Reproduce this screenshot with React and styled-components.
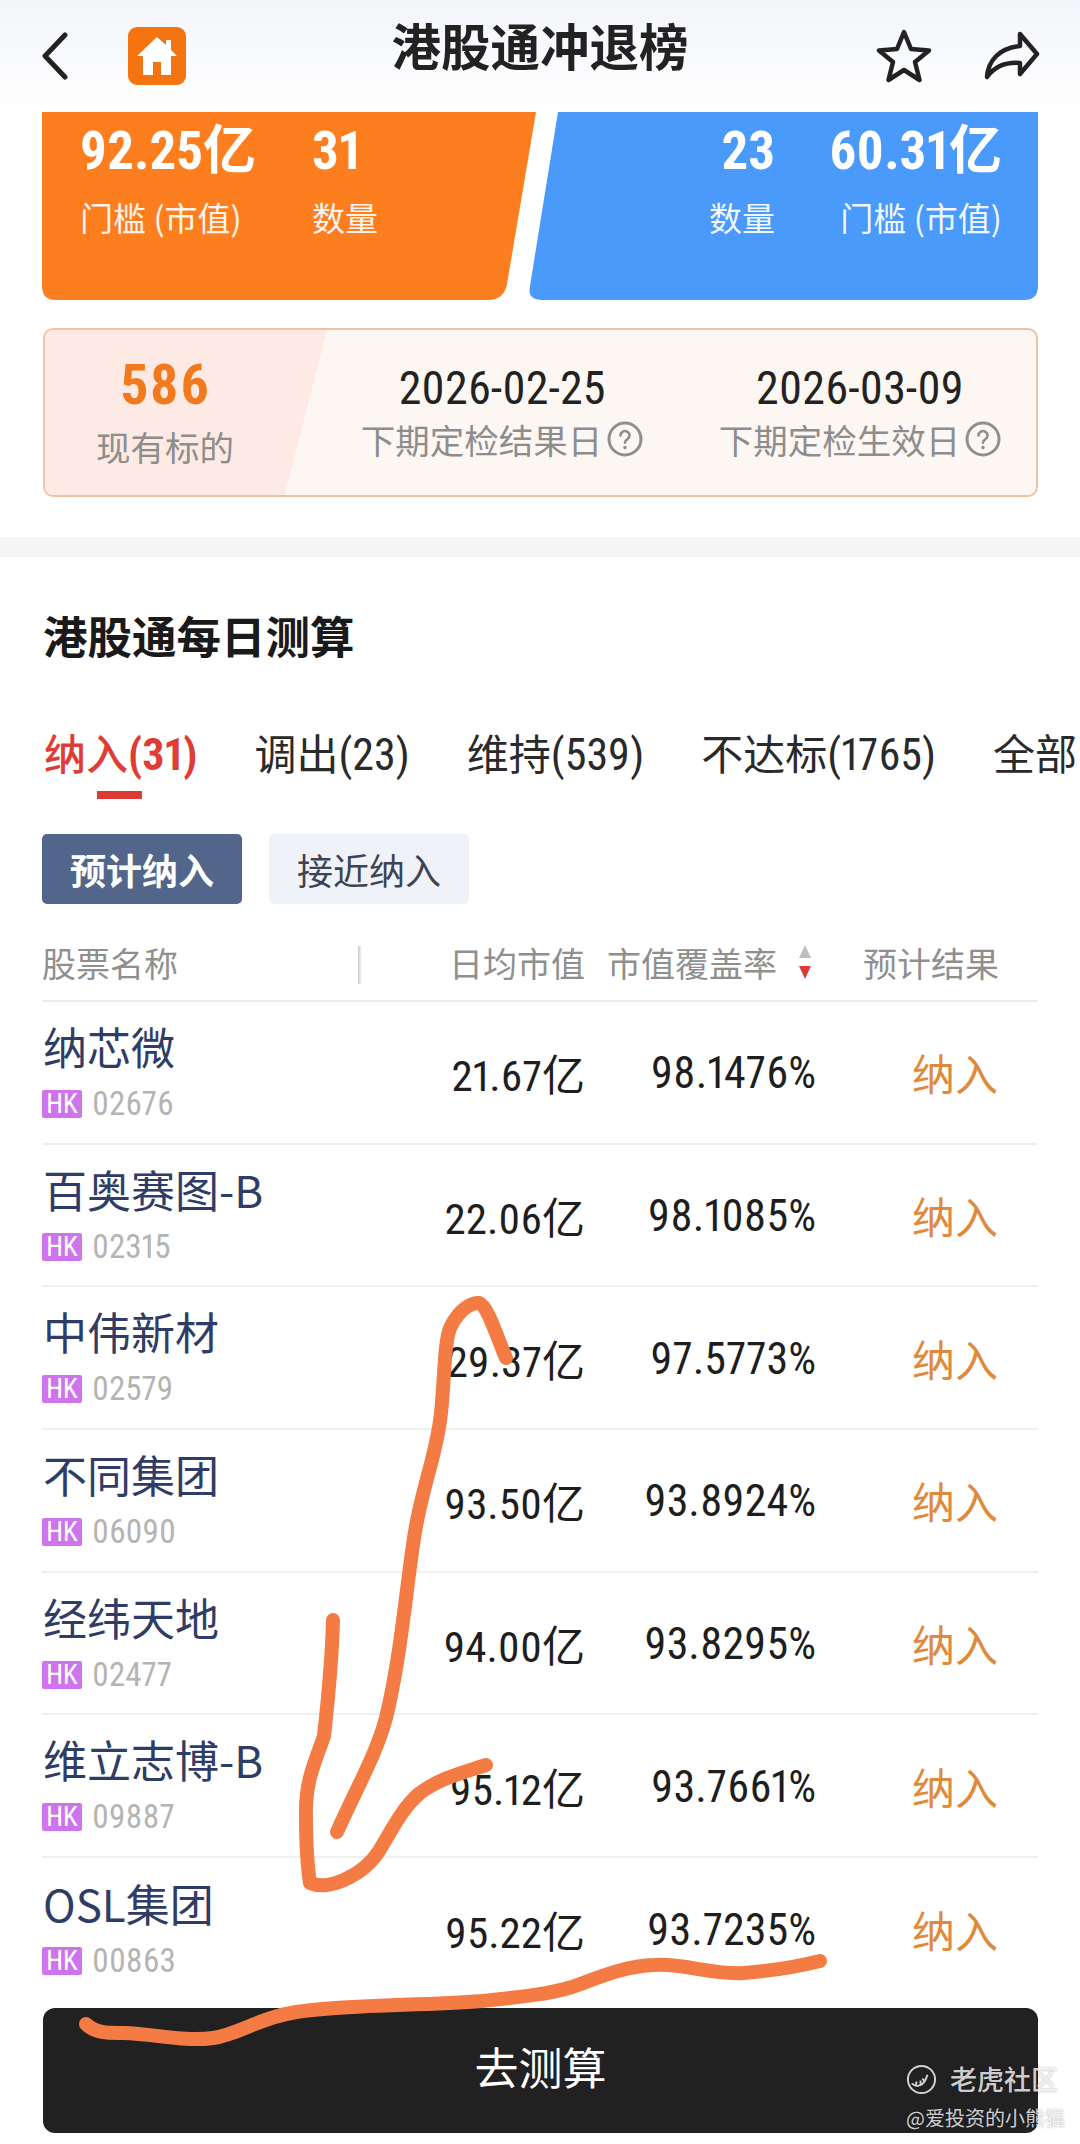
import React from 'react';
import styled, { createGlobalStyle, css } from 'styled-components';

const CJK = '"Noto Sans CJK SC", "Noto Sans", sans-serif';

// DIN-like digits: Roboto's condensed width, with the CJK font for 亿
const din = css`
  font-family: Roboto, "Noto Sans CJK SC", sans-serif;
  font-stretch: 75%;
  font-variant-numeric: proportional-nums;
`;

const GlobalStyle = createGlobalStyle`
  html, body {
    margin: 0;
    padding: 0;
    background: #fff;
  }
  * { box-sizing: border-box; }
`;

const Page = styled.div`
  position: relative;
  width: 1080px;
  height: 2144px;
  overflow: hidden;
  background: #fff;
  font-family: ${CJK};
  color: #1f1f1f;
`;

// Top bar
const Header = styled.header`
  position: relative;
  height: 112px;
  padding: 0 40px;
  display: flex;
  align-items: center;
  background: linear-gradient(180deg, #f3f5fa 0%, #f9fafd 50%, #ffffff 100%);
`;

const HomeBadge = styled.div`
  width: 58px;
  height: 58px;
  margin-left: 58px;
  border-radius: 9px;
  background: #f57412;
  display: flex;
  align-items: center;
  justify-content: center;
`;

const Title = styled.h1`
  position: absolute;
  left: 0;
  right: 0;
  top: 19px;
  margin: 0;
  text-align: center;
  font-size: 49.5px;
  line-height: 52px;
  font-weight: 700;
  color: #222;
`;

const HeaderActions = styled.div`
  margin-left: auto;
  display: flex;
  align-items: center;
  gap: 52px;
`;

// Threshold cards
const Cards = styled.section`
  display: flex;
  padding: 0 42px;
`;

const ThresholdCard = styled.div`
  height: 188px;
  color: #fff;
  display: flex;
  padding-top: 8px;
  ${(p) => p.$side === 'left' ? `
    width: 495px;
    gap: 56px;
    padding-left: 38px;
    background: #fd7e1e;
    clip-path: path('M0 0H494L465 172Q462 188 446 188H14Q0 188 0 174Z');
  ` : `
    width: 510px;
    margin-left: -9px;
    padding-right: 36px;
    justify-content: flex-end;
    gap: 54px;
    background: #4a9afb;
    clip-path: path('M30 0H510V174Q510 188 496 188H14Q-1 188 2 174Z');
  `}
`;

const Metric = styled.div`
  display: flex;
  flex-direction: column;
  align-items: ${(p) => (p.$end ? 'flex-end' : 'flex-start')};
`;

const MetricValue = styled.div`
  ${din}
  font-size: 53px;
  line-height: 62px;
  font-weight: 700;
  white-space: nowrap;
`;

const MetricLabel = styled.div`
  margin-top: 15px;
  font-size: 33px;
  line-height: 40px;
  white-space: nowrap;
  opacity: 0.92;
`;

// 586 / dates panel
const InfoPanel = styled.section`
  position: relative;
  margin: 28px 42px 0 43px;
  height: 169px;
  border: 2px solid #efc3a1;
  border-radius: 10px;
  background: #fdf7f3;
  overflow: hidden;
  display: grid;
  grid-template-columns: 240px 282px 282px;
  column-gap: 76px;
  align-items: start;

  &::before {
    content: '';
    position: absolute;
    left: 0;
    top: 0;
    bottom: 0;
    width: 282px;
    background: #fdeae4;
    clip-path: polygon(0 0, 100% 0, 85% 100%, 0 100%);
  }
`;

const InfoCol = styled.div`
  position: relative;
  display: flex;
  flex-direction: column;
  align-items: center;
  padding-top: ${(p) => (p.$count ? 30 : 33)}px;
`;

const BigCount = styled.div`
  ${din}
  font-size: 56px;
  line-height: 50px;
  font-weight: 700;
  letter-spacing: 1px;
  color: #f27a1e;
`;

const InfoDate = styled.div`
  ${din}
  font-size: 46px;
  line-height: 50px;
  color: #222;
`;

const InfoLabel = styled.div`
  display: flex;
  align-items: center;
  gap: 5px;
  margin-top: ${(p) => (p.$low ? '14px' : '4px')};
  font-size: 34.5px;
  line-height: 44px;
  white-space: nowrap;
  color: #8d8d8d;
`;

const Band = styled.div`
  height: 20px;
  margin-top: 40px;
  background: #f5f5f5;
`;

// Daily calculation block
const SectionTitle = styled.h2`
  margin: 48px 0 0 43px;
  font-size: 44.5px;
  line-height: 60px;
  font-weight: 700;
  color: #1a1a1a;
`;

const Tabs = styled.div`
  display: flex;
  gap: 57px;
  margin-top: 59px;
  padding-left: 44px;
  white-space: nowrap;
`;

const Tab = styled.div`
  position: relative;
  font-size: 42px;
  line-height: 56px;
  color: ${(p) => (p.$active ? '#e03c36' : '#2a2a2a')};
  font-weight: ${(p) => (p.$active ? 500 : 400)};

  span {
    ${din}
    font-size: 44px;
    font-weight: ${(p) => (p.$active ? 700 : 400)};
  }

  ${(p) => p.$active && `
    &::after {
      content: '';
      position: absolute;
      left: 53px;
      bottom: -16px;
      width: 45px;
      height: 8px;
      background: #dd3a35;
    }
  `}
`;

const Chips = styled.div`
  display: flex;
  gap: 27px;
  margin: 51px 0 0 42px;
`;

const Chip = styled.div`
  width: 200px;
  height: 70px;
  border-radius: 5px;
  display: flex;
  align-items: center;
  justify-content: center;
  font-size: 36px;
  font-weight: ${(p) => (p.$active ? 700 : 400)};
  color: ${(p) => (p.$active ? '#fff' : '#3d4350')};
  background: ${(p) => (p.$active ? '#51668a' : '#eff3f9')};
`;

const Table = styled.div`
  margin: 0 42px;
`;

const columns = `
  display: grid;
  grid-template-columns: 300px 243px 231px 222px;
  align-items: center;
`;

const HeadRow = styled.div`
  ${columns}
  position: relative;
  height: 98px;
  border-bottom: 2px solid #ebebeb;
  font-size: 34px;
  color: #8f8f8f;
`;

const HeadDivider = styled.i`
  position: absolute;
  left: 316px;
  top: 42px;
  width: 4px;
  height: 38px;
  background: linear-gradient(90deg, #c9c9c9, rgba(255, 255, 255, 0));
`;

const HeadCell = styled.div`
  padding-top: 20px;
  white-space: nowrap;
  text-align: ${(p) => p.$align || 'left'};
  padding-right: ${(p) => p.$pr || 0}px;
  ${(p) => p.$sort && `
    display: flex;
    justify-content: flex-end;
    align-items: center;
    gap: 20px;
  `}
`;

const Row = styled.div`
  ${columns}
  height: 142.7px;
  border-bottom: 2px solid #efefef;
  ${(p) => p.$last && 'border-bottom: none;'}
`;

const NameCell = styled.div`
  display: flex;
  flex-direction: column;
  padding-bottom: 5px;
`;

const StockName = styled.div`
  margin-left: 1px;
  font-size: 44px;
  line-height: 56px;
  color: #2f3d66;
  white-space: nowrap;
`;

const CodeLine = styled.div`
  display: flex;
  align-items: center;
  gap: 10px;
  margin-top: 12px;
`;

const HkBadge = styled.span`
  ${din}
  width: 40px;
  height: 28px;
  border-radius: 2px;
  background: #cf74ee;
  color: #fff;
  font-size: 27px;
  line-height: 28px;
  text-align: center;
`;

const Code = styled.span`
  ${din}
  font-size: 33px;
  line-height: 36px;
  color: #b4b4b4;
`;

const NumCell = styled.div`
  ${din}
  font-size: ${(p) => (p.$rate ? 44 : 43)}px;
  text-align: right;
  white-space: nowrap;
  color: #1e1e1e;
  ${(p) => p.$rate && 'padding-top: 2px;'}
`;

const Result = styled.div`
  font-size: 43px;
  text-align: right;
  padding-right: 40px;
  color: #e0893a;
`;

const CalcButton = styled.button`
  display: block;
  width: 995px;
  height: 125px;
  margin: 7px 0 0 43px;
  padding: 0 0 8px;
  border: 0;
  border-radius: 12px;
  background: #212121;
  color: #fff;
  font-family: ${CJK};
  font-size: 44px;
`;

// Things lying over the page: the hand-drawn marks and the watermark
const Scribble = styled.svg`
  position: absolute;
  left: 0;
  top: 0;
  pointer-events: none;
`;

const Watermark = styled.div`
  position: absolute;
  left: 906px;
  top: 2060px;
  color: rgba(255, 255, 255, 0.8);
  text-shadow: 0 0 2px rgba(0, 0, 0, 0.35);
`;

const WatermarkBrand = styled.div`
  display: flex;
  align-items: center;
  gap: 13px;
  font-size: 27px;
  line-height: 38px;
  font-weight: 500;
`;

const WatermarkUser = styled.div`
  margin-top: 6px;
  font-size: 20px;
  line-height: 28px;
  white-space: nowrap;
`;

const rows = [
  { name: '纳芯微', code: '02676', cap: '21.67亿', rate: '98.1476%' },
  { name: '百奥赛图-B', code: '02315', cap: '22.06亿', rate: '98.1085%' },
  { name: '中伟新材', code: '02579', cap: '29.37亿', rate: '97.5773%' },
  { name: '不同集团', code: '06090', cap: '93.50亿', rate: '93.8924%' },
  { name: '经纬天地', code: '02477', cap: '94.00亿', rate: '93.8295%' },
  { name: '维立志博-B', code: '09887', cap: '95.12亿', rate: '93.7661%' },
  { name: 'OSL集团', code: '00863', cap: '95.22亿', rate: '93.7235%' },
];

function HelpIcon() {
  return (
    <svg width="36" height="36" viewBox="0 0 36 36" fill="none">
      <circle cx="18" cy="18" r="16" stroke="#8f8f8f" strokeWidth="3" />
      <path d="M13.500 14.500a4.500 4.500 0 1 1 6.800 3.900c-1.500.9-2.300 1.700-2.300 3.300" stroke="#8f8f8f" strokeWidth="2.600" strokeLinecap="round" />
      <circle cx="18" cy="26.500" r="1.700" fill="#8f8f8f" />
    </svg>
  );
}

export default function App() {
  return (
    <Page>
      <GlobalStyle />
      <Header>
        <svg width="30" height="48" viewBox="0 0 30 48" fill="none">
          <path d="M25 3L5 24l20 21" stroke="#222" strokeWidth="5" strokeLinecap="round" strokeLinejoin="round" />
        </svg>
        <HomeBadge>
          <svg width="42" height="40" viewBox="0 0 42 40">
            <path d="M21 1L1 20h6v19h10V26h8v13h10V20h6L35 14V4h-5v5z" fill="#fff" />
          </svg>
        </HomeBadge>
        <Title>港股通冲退榜</Title>
        <HeaderActions>
          <svg width="56" height="56" viewBox="0 0 56 56" fill="none">
            <path d="M28 4l7 17 18 1.500-14 11.500 4.500 18L28 42l-15.500 10L17 34 3 22.500 21 21z" stroke="#222" strokeWidth="4.500" strokeLinejoin="round" />
          </svg>
          <svg width="56" height="50" viewBox="0 0 56 50" fill="none">
            <path d="M36 3l17 20-17 20V32C22 31 11 35 3 46c1-16 12-29 33-31z" stroke="#222" strokeWidth="4.500" strokeLinejoin="round" />
          </svg>
        </HeaderActions>
      </Header>

      <Cards>
        <ThresholdCard $side="left">
          <Metric>
            <MetricValue>92.25亿</MetricValue>
            <MetricLabel>门槛 (市值)</MetricLabel>
          </Metric>
          <Metric>
            <MetricValue>31</MetricValue>
            <MetricLabel>数量</MetricLabel>
          </Metric>
        </ThresholdCard>
        <ThresholdCard $side="right">
          <Metric $end>
            <MetricValue>23</MetricValue>
            <MetricLabel>数量</MetricLabel>
          </Metric>
          <Metric $end>
            <MetricValue>60.31亿</MetricValue>
            <MetricLabel>门槛 (市值)</MetricLabel>
          </Metric>
        </ThresholdCard>
      </Cards>

      <InfoPanel>
        <InfoCol $count>
          <BigCount>586</BigCount>
          <InfoLabel $low>现有标的</InfoLabel>
        </InfoCol>
        <InfoCol>
          <InfoDate>2026-02-25</InfoDate>
          <InfoLabel>下期定检结果日<HelpIcon /></InfoLabel>
        </InfoCol>
        <InfoCol>
          <InfoDate>2026-03-09</InfoDate>
          <InfoLabel>下期定检生效日<HelpIcon /></InfoLabel>
        </InfoCol>
      </InfoPanel>

      <Band />

      <SectionTitle>港股通每日测算</SectionTitle>

      <Tabs>
        <Tab $active>纳入<span>(31)</span></Tab>
        <Tab>调出<span>(23)</span></Tab>
        <Tab>维持<span>(539)</span></Tab>
        <Tab>不达标<span>(1765)</span></Tab>
        <Tab>全部</Tab>
      </Tabs>

      <Chips>
        <Chip $active>预计纳入</Chip>
        <Chip>接近纳入</Chip>
      </Chips>

      <Table>
        <HeadRow>
          <HeadCell>股票名称</HeadCell>
          <HeadDivider />
          <HeadCell $align="right">日均市值</HeadCell>
          <HeadCell $sort $pr={3}>
            市值覆盖率
            <svg width="16" height="36" viewBox="0 0 16 36">
              <path d="M8 1l6 13H2z" fill="#bdbdbd" />
              <path d="M8 35L2 22h12z" fill="#dd3a35" />
            </svg>
          </HeadCell>
          <HeadCell $align="right" $pr={39}>预计结果</HeadCell>
        </HeadRow>
        {rows.map((r, i) => (
          <Row key={r.code} $last={i === rows.length - 1}>
            <NameCell>
              <StockName>{r.name}</StockName>
              <CodeLine>
                <HkBadge>HK</HkBadge>
                <Code>{r.code}</Code>
              </CodeLine>
            </NameCell>
            <NumCell>{r.cap}</NumCell>
            <NumCell $rate>{r.rate}</NumCell>
            <Result>纳入</Result>
          </Row>
        ))}
      </Table>

      <CalcButton>去测算</CalcButton>

      <Watermark>
        <WatermarkBrand>
          <svg width="31" height="31" viewBox="0 0 32 32" fill="none" stroke="currentColor" strokeWidth="2">
            <circle cx="16" cy="16" r="14" />
            <path d="M6 20c5 5 13 3 16-9M10 22l1-4M15 22l0-5M19 18l-2-3" />
          </svg>
          老虎社区
        </WatermarkBrand>
        <WatermarkUser>@爱投资的小熊猫</WatermarkUser>
      </Watermark>

      <Scribble width="1080" height="2144" viewBox="0 0 1080 2144" fill="none" stroke="#f47c44" strokeWidth="14" strokeLinecap="round" strokeLinejoin="round">
        <path d="M337 1832C358 1785 376 1755 386 1718C400 1660 405 1600 413 1545C420 1490 436 1460 441 1413C445 1375 444 1340 451 1326C458 1312 470 1302 479 1303C488 1306 498 1340 506 1358" />
        <path d="M333 1620C332 1660 328 1700 324 1736C316 1760 305 1780 306 1816C306 1845 308 1870 310 1883C322 1888 334 1884 344 1880C362 1872 372 1862 379 1851C392 1830 402 1808 420 1793C440 1778 465 1772 486 1765" />
        <path d="M86 2024C96 2034 110 2033 124 2033C155 2034 185 2042 213 2038C240 2034 258 2018 296 2012C350 2004 420 2006 482 2001C520 1997 550 1994 572 1987C600 1977 625 1966 654 1965C685 1963 710 1975 744 1973C770 1971 800 1966 820 1961" />
      </Scribble>
    </Page>
  );
}
